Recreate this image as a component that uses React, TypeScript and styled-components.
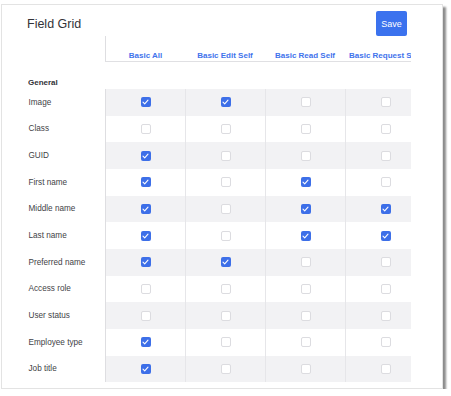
import React from "react";
import styled, { createGlobalStyle } from "styled-components";

const GlobalStyle = createGlobalStyle`
  html, body {
    margin: 0;
    padding: 0;
    background: #ffffff;
  }
  body {
    font-family: "Liberation Sans", Arial, sans-serif;
  }
`;

const Card = styled.div`
  margin: 4px 0 0 1px;
  width: 442px;
  height: 385px;
  box-sizing: border-box;
  border: 1px solid #e3e3e3;
  box-shadow: 3px 3px 2px rgba(0, 0, 0, 0.45);
  background: #ffffff;
  display: flex;
  flex-direction: column;
  overflow: hidden;
`;

const Header = styled.div`
  display: flex;
  align-items: center;
  justify-content: space-between;
  padding: 6px 35px 0 25px;
`;

const Title = styled.h1`
  margin: 0;
  font-size: 12.5px;
  font-weight: 400;
  color: #333338;
`;

const SaveButton = styled.button`
  width: 31px;
  height: 25px;
  padding: 0;
  border: none;
  border-radius: 2px;
  background: #3b72ee;
  color: #ffffff;
  font-family: inherit;
  font-size: 9px;
  cursor: pointer;
`;

const TableWrap = styled.div`
  margin-left: 26px;
  width: 383px;
  overflow: hidden;
`;

const Row = styled.div<{ $height: number }>`
  display: grid;
  grid-template-columns: 77px repeat(4, 80px);
  height: ${(p) => p.$height}px;
`;

const HeadCell = styled.div<{ $first?: boolean }>`
  box-sizing: border-box;
  display: flex;
  align-items: flex-end;
  justify-content: center;
  padding-bottom: 1.5px;
  border-bottom: 1.5px solid #e0e0e3;
  border-left: ${(p) => (p.$first ? "1.5px solid #dedee1" : "none")};
  white-space: nowrap;
  font-size: 8px;
  line-height: 9px;
  font-weight: 700;
  color: #3f73ec;
`;

const EmptyCell = styled.div``;

const SectionLabel = styled.div`
  display: flex;
  align-items: flex-end;
  padding-bottom: 2.5px;
  font-size: 8px;
  line-height: 9px;
  font-weight: 700;
  color: #333338;
`;

const RowLabel = styled.div`
  display: flex;
  align-items: center;
  padding-left: 0.5px;
  font-size: 8.2px;
  color: #3f3f46;
  white-space: nowrap;
`;

const DataCell = styled.div<{ $striped: boolean; $first: boolean }>`
  box-sizing: border-box;
  display: flex;
  align-items: center;
  justify-content: center;
  background: ${(p) => (p.$striped ? "#f2f2f4" : "#ffffff")};
  border-left: ${(p) =>
    p.$first ? "1.5px solid #dedee1" : "1px solid #e6e6e9"};
`;

const Box = styled.span<{ $checked: boolean }>`
  box-sizing: border-box;
  width: 10px;
  height: 10px;
  border-radius: 2px;
  display: flex;
  align-items: center;
  justify-content: center;
  background: ${(p) => (p.$checked ? "#3d6fe8" : "#ffffff")};
  border: ${(p) => (p.$checked ? "none" : "1px solid #dcdce0")};
`;

const columns = ["Basic All", "Basic Edit Self", "Basic Read Self", "Basic Request Self"];

const rows: [string, number[]][] = [
  ["Image", [1, 1, 0, 0]],
  ["Class", [0, 0, 0, 0]],
  ["GUID", [1, 0, 0, 0]],
  ["First name", [1, 0, 1, 0]],
  ["Middle name", [1, 0, 1, 1]],
  ["Last name", [1, 0, 1, 1]],
  ["Preferred name", [1, 1, 0, 0]],
  ["Access role", [0, 0, 0, 0]],
  ["User status", [0, 0, 0, 0]],
  ["Employee type", [1, 0, 0, 0]],
  ["Job title", [1, 0, 0, 0]],
];

const Check = () => (
  <svg width="7" height="6" viewBox="0 0 7 6" fill="none">
    <path d="M1 3.2 L2.7 4.8 L6 1.2" stroke="#ffffff" strokeWidth="1.1" strokeLinecap="round" strokeLinejoin="round" />
  </svg>
);

const Checkbox = ({ checked }: { checked: boolean }) => (
  <Box $checked={checked}>{checked && <Check />}</Box>
);

export default function App() {
  return (
    <>
      <GlobalStyle />
      <Card>
        <Header>
          <Title>Field Grid</Title>
          <SaveButton>Save</SaveButton>
        </Header>
        <TableWrap>
          <Row $height={26}>
            <EmptyCell />
            {columns.map((c, i) => (
              <HeadCell key={c} $first={i === 0}>
                {c}
              </HeadCell>
            ))}
          </Row>
          <Row $height={27}>
            <SectionLabel>General</SectionLabel>
          </Row>
          {rows.map(([label, vals], r) => (
            <Row key={label} $height={26.67}>
              <RowLabel>{label}</RowLabel>
              {vals.map((v, i) => (
                <DataCell key={i} $striped={r % 2 === 0} $first={i === 0}>
                  <Checkbox checked={v === 1} />
                </DataCell>
              ))}
            </Row>
          ))}
        </TableWrap>
      </Card>
    </>
  );
}
